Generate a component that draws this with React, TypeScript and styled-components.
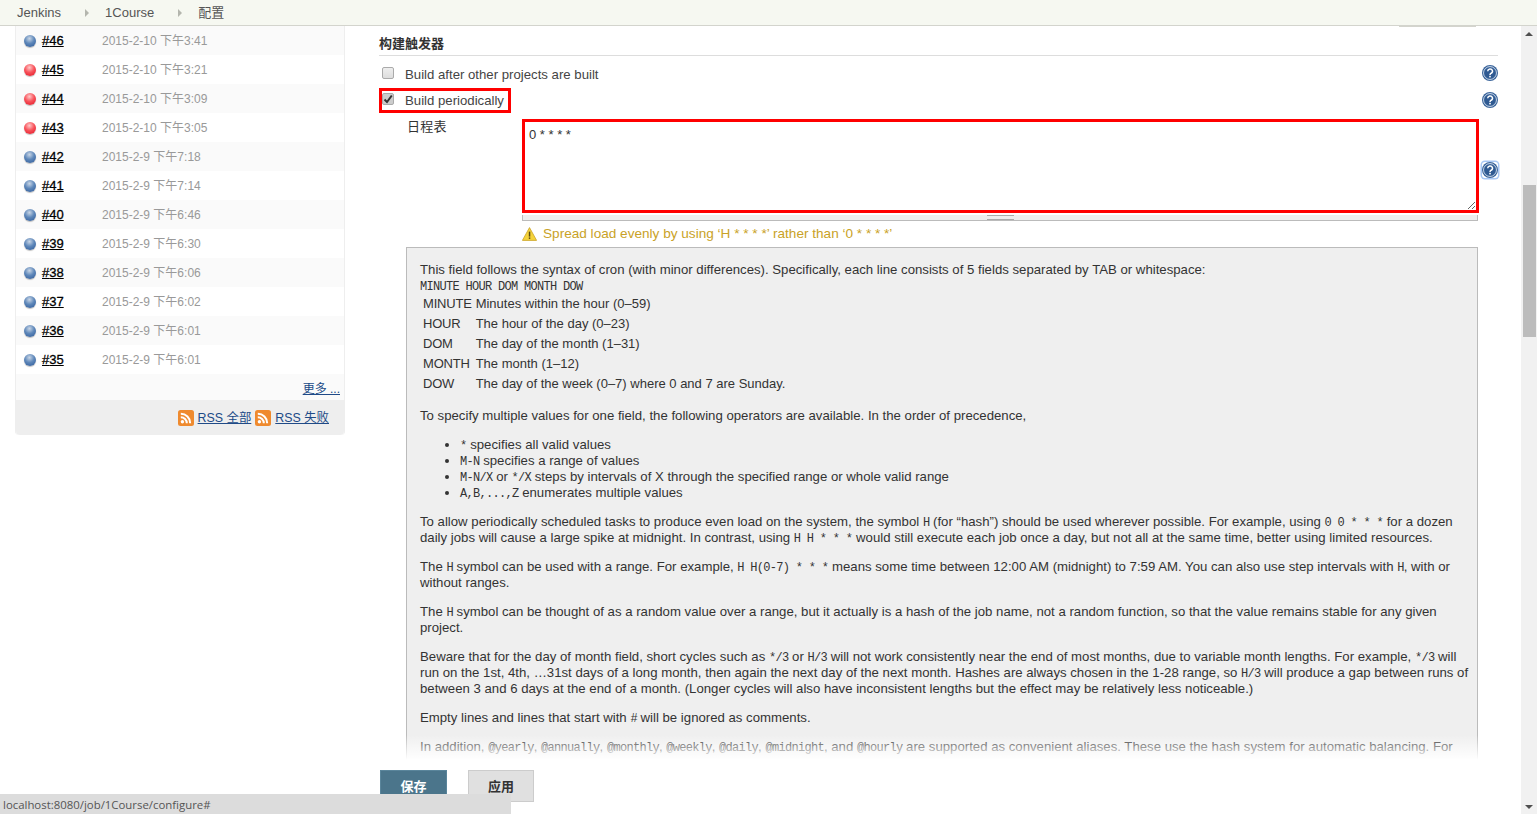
import { createGlobalStyle, styled } from "styled-components";

const builds = [
  { id: "46", date: "2015-2-10 下午3:41", ok: true },
  { id: "45", date: "2015-2-10 下午3:21", ok: false },
  { id: "44", date: "2015-2-10 下午3:09", ok: false },
  { id: "43", date: "2015-2-10 下午3:05", ok: false },
  { id: "42", date: "2015-2-9 下午7:18", ok: true },
  { id: "41", date: "2015-2-9 下午7:14", ok: true },
  { id: "40", date: "2015-2-9 下午6:46", ok: true },
  { id: "39", date: "2015-2-9 下午6:30", ok: true },
  { id: "38", date: "2015-2-9 下午6:06", ok: true },
  { id: "37", date: "2015-2-9 下午6:02", ok: true },
  { id: "36", date: "2015-2-9 下午6:01", ok: true },
  { id: "35", date: "2015-2-9 下午6:01", ok: true },
];

const fields = [
  ["MINUTE", "Minutes within the hour (0–59)"],
  ["HOUR", "The hour of the day (0–23)"],
  ["DOM", "The day of the month (1–31)"],
  ["MONTH", "The month (1–12)"],
  ["DOW", "The day of the week (0–7) where 0 and 7 are Sunday."],
];

const HelpIcon = () => (
  <svg width="16" height="16" viewBox="0 0 16 16">
    <circle cx="8" cy="8" r="8" fill="#3b659b" />
    <circle cx="8" cy="8" r="6.4" fill="none" stroke="#dfe8f3" strokeWidth="0.9" />
    <circle cx="8" cy="8" r="5.6" fill="#2f5a92" />
    <path d="M5.7 6.2a2.4 2.2 0 1 1 3.5 2c-.8.5-1.2.8-1.2 1.8" fill="none" stroke="#fff" strokeWidth="1.5" />
    <rect x="7.2" y="10.8" width="1.6" height="1.6" fill="#fff" />
  </svg>
);

const RssIcon = () => (
  <svg width="16" height="16" viewBox="0 0 16 16">
    <rect width="16" height="16" rx="2.5" fill="#ef8a2e" />
    <circle cx="4.4" cy="11.8" r="1.7" fill="#fff" />
    <path d="M2.8 7.2a6 6 0 0 1 6 6M2.8 3.8a9.4 9.4 0 0 1 9.4 9.4" fill="none" stroke="#fff" strokeWidth="2" />
  </svg>
);

const WarningIcon = () => (
  <svg width="15" height="14" viewBox="0 0 15 14">
    <path d="M7.5 .6 14.6 13.4H.4Z" fill="#f5d33b" stroke="#c9a227" strokeWidth="0.8" />
    <rect x="6.8" y="4.6" width="1.5" height="5" fill="#5a4a10" />
    <rect x="6.8" y="10.4" width="1.5" height="1.5" fill="#5a4a10" />
  </svg>
);

const App = () => {
  return (
    <Shell>
      <GlobalStyle />
      <TopBar>
        <Crumb>Jenkins</Crumb>
        <CrumbArrow />
        <Crumb>1Course</Crumb>
        <CrumbArrow />
        <Crumb>配置</Crumb>
        <TabStub />
      </TopBar>
      <Body>
        <Sidebar>
          {builds.map((build, index) => (
            <BuildRow key={build.id} $odd={index % 2 === 0}>
              <Ball $ok={build.ok} />
              <BuildLink href="#">#{build.id}</BuildLink>
              <BuildDate>{build.date}</BuildDate>
            </BuildRow>
          ))}
          <MoreRow>
            <MoreLink href="#">更多 ...</MoreLink>
          </MoreRow>
          <RssRow>
            <RssIcon />
            <BlueLink href="#">RSS 全部</BlueLink>
            <RssIcon />
            <BlueLink href="#">RSS 失败</BlueLink>
          </RssRow>
        </Sidebar>
        <Main>
          <SectionTitle>构建触发器</SectionTitle>
          <CheckRow>
            <CheckLabel>
              <CheckBox />
              Build after other projects are built
            </CheckLabel>
            <HelpButton $lift={3}>
              <HelpIcon />
            </HelpButton>
          </CheckRow>
          <CheckRow>
            <CheckLabel $marked>
              <CheckBox $checked>
                <svg width="10" height="10" viewBox="0 0 10 10">
                  <path d="M1.5 5.5 4 8l4.8-6.5" fill="none" stroke="#333" strokeWidth="2" />
                </svg>
              </CheckBox>
              Build periodically
            </CheckLabel>
            <HelpButton $lift={1}>
              <HelpIcon />
            </HelpButton>
          </CheckRow>
          <ScheduleRow>
            <ScheduleLabel>日程表</ScheduleLabel>
            <ScheduleField>
              <ScheduleInput defaultValue="0 * * * *" spellCheck={false} />
              <Grippie>
                <GrippieLines />
              </Grippie>
            </ScheduleField>
            <HelpButton $focused>
              <HelpIcon />
            </HelpButton>
          </ScheduleRow>
          <Warning>
            <WarningIcon />
            Spread load evenly by using ‘H * * * *’ rather than ‘0 * * * *’
          </Warning>
          <HelpBox>
            <Para>
              This field follows the syntax of cron (with minor differences). Specifically, each line consists of 5
              fields separated by TAB or whitespace:
              <br />
              <Code>MINUTE HOUR DOM MONTH DOW</Code>
            </Para>
            <FieldTable>
              <tbody>
                {fields.map(([name, text]) => (
                  <tr key={name}>
                    <td>{name}</td>
                    <td>{text}</td>
                  </tr>
                ))}
              </tbody>
            </FieldTable>
            <Para>
              To specify multiple values for one field, the following operators are available. In the order of
              precedence,
            </Para>
            <OperatorList>
              <li>
                <Code>*</Code> specifies all valid values
              </li>
              <li>
                <Code>M-N</Code> specifies a range of values
              </li>
              <li>
                <Code>M-N/X</Code> or <Code>*/X</Code> steps by intervals of X through the specified range or whole
                valid range
              </li>
              <li>
                <Code>A,B,...,Z</Code> enumerates multiple values
              </li>
            </OperatorList>
            <Para>
              To allow periodically scheduled tasks to produce even load on the system, the symbol <Code>H</Code> (for
              “hash”) should be used wherever possible. For example, using <Code>0 0 * * *</Code> for a dozen daily jobs
              will cause a large spike at midnight. In contrast, using <Code>H H * * *</Code> would still execute each
              job once a day, but not all at the same time, better using limited resources.
            </Para>
            <Para>
              The <Code>H</Code> symbol can be used with a range. For example, <Code>H H(0-7) * * *</Code> means some
              time between 12:00 AM (midnight) to 7:59 AM. You can also use step intervals with <Code>H</Code>, with or
              without ranges.
            </Para>
            <Para>
              The <Code>H</Code> symbol can be thought of as a random value over a range, but it actually is a hash of
              the job name, not a random function, so that the value remains stable for any given project.
            </Para>
            <Para>
              Beware that for the day of month field, short cycles such as <Code>*/3</Code> or <Code>H/3</Code> will not
              work consistently near the end of most months, due to variable month lengths. For example, <Code>*/3</Code>{" "}
              will run on the 1st, 4th, …31st days of a long month, then again the next day of the next month. Hashes are
              always chosen in the 1-28 range, so <Code>H/3</Code> will produce a gap between runs of between 3 and 6
              days at the end of a month. (Longer cycles will also have inconsistent lengths but the effect may be
              relatively less noticeable.)
            </Para>
            <Para>
              Empty lines and lines that start with <Code>#</Code> will be ignored as comments.
            </Para>
            <Para>
              In addition, <Code>@yearly</Code>, <Code>@annually</Code>, <Code>@monthly</Code>, <Code>@weekly</Code>,{" "}
              <Code>@daily</Code>, <Code>@midnight</Code>, and <Code>@hourly</Code> are supported as convenient aliases.
              These use the hash system for automatic balancing. For
            </Para>
          </HelpBox>
          <ActionBar>
            <SaveButton>保存</SaveButton>
            <ApplyButton>应用</ApplyButton>
          </ActionBar>
        </Main>
        <Scrollbar>
          <ScrollArrow $up />
          <ScrollThumb />
          <ScrollArrow />
        </Scrollbar>
      </Body>
      <StatusBar>localhost:8080/job/1Course/configure#</StatusBar>
    </Shell>
  );
};

export default App;

const GlobalStyle = createGlobalStyle`
  html, body {
    margin: 0;
    height: 100%;
    overflow: hidden;
    background: #fff;
  }
  body {
    font-family: "Liberation Sans", "Noto Sans CJK SC", sans-serif;
    font-size: 13px;
    line-height: 16px;
    color: #333;
  }
`;

const Shell = styled.div`
  position: relative;
  display: flex;
  flex-direction: column;
  height: 100vh;
  overflow: hidden;
`;

const TopBar = styled.div`
  position: relative;
  display: flex;
  align-items: center;
  flex: none;
  height: 25px;
  padding-left: 17px;
  background: #f6f8f1;
  border-bottom: 1px solid #d3d4cd;
`;

const Crumb = styled.span`
  color: #555;
`;

const CrumbArrow = styled.span`
  width: 0;
  height: 0;
  margin: 0 16px 0 24px;
  border-left: 4px solid #b4b6ae;
  border-top: 4px solid transparent;
  border-bottom: 4px solid transparent;
`;

const TabStub = styled.div`
  position: absolute;
  left: 1399px;
  bottom: -2px;
  width: 77px;
  height: 1px;
  background: #d3d4cd;
`;

const Body = styled.div`
  display: flex;
  flex: 1;
  min-height: 0;
`;

const Sidebar = styled.div`
  flex: none;
  align-self: flex-start;
  width: 328px;
  margin-left: 15px;
  border-left: 1px solid #eee;
  border-right: 1px solid #eee;
  border-radius: 0 0 4px 4px;
`;

const BuildRow = styled.div<{ $odd: boolean }>`
  display: flex;
  align-items: center;
  height: 29px;
  padding-left: 8px;
  background: ${(p) => (p.$odd ? "#fafafa" : "#fff")};
`;

const Ball = styled.span<{ $ok: boolean }>`
  flex: none;
  width: 12px;
  height: 12px;
  margin-right: 6px;
  border-radius: 50%;
  box-shadow: 0 1px 1px rgba(0, 0, 0, 0.25);
  background: ${(p) =>
    p.$ok
      ? "radial-gradient(circle at 45% 30%, #c9d6e6 0%, #5f88ba 45%, #2a5696 100%)"
      : "radial-gradient(circle at 45% 30%, #ffc9c9 0%, #f8545c 45%, #e01020 100%)"};
`;

const BuildLink = styled.a`
  width: 60px;
  color: #000;
  text-decoration: underline;
  -webkit-text-stroke: 0.3px #000;
`;

const BuildDate = styled.span`
  font-size: 12px;
  color: #999;
`;

const MoreRow = styled.div`
  display: flex;
  justify-content: flex-end;
  align-items: flex-end;
  box-sizing: border-box;
  height: 26px;
  padding: 0 4px 3px 0;
  background: #fafafa;
`;

const BlueLink = styled.a`
  color: #204a87;
  text-decoration: underline;
  font-size: 12.4px;
`;

const MoreLink = styled(BlueLink)`
  font-size: 12px;
`;

const RssRow = styled.div`
  display: flex;
  justify-content: flex-end;
  align-items: center;
  gap: 4px;
  height: 35px;
  padding-right: 15px;
  background: #eee;
  border-radius: 0 0 4px 4px;
`;

const Main = styled.div`
  position: relative;
  flex: 1;
  min-width: 0;
  padding: 10px 23px 0 34px;
`;

const SectionTitle = styled.div`
  padding-bottom: 3px;
  margin-bottom: 6px;
  font-weight: bold;
  color: #333;
  border-bottom: 1px solid #ddd;
`;

const CheckRow = styled.div`
  display: flex;
  justify-content: space-between;
  align-items: center;
  height: 25px;
  margin-bottom: 1px;
`;

const CheckLabel = styled.label<{ $marked?: boolean }>`
  display: flex;
  align-items: center;
  box-sizing: border-box;
  height: 25px;
  padding: ${(p) => (p.$marked ? "1px 4px 0 0" : "0")};
  font-size: 13.2px;
  color: #444;
  border: 3px solid ${(p) => (p.$marked ? "#f00" : "transparent")};
`;

const CheckBox = styled.span<{ $checked?: boolean }>`
  display: flex;
  align-items: center;
  justify-content: center;
  box-sizing: border-box;
  flex: none;
  width: 12px;
  height: 12px;
  margin: -4px 11px 0 0;
  border: 1px solid #aaa;
  border-radius: 2px;
  background: ${(p) => (p.$checked ? "#ccc" : "linear-gradient(#eee, #ddd)")};
`;

const HelpButton = styled.span<{ $focused?: boolean; $lift?: number }>`
  display: flex;
  flex: none;
  align-self: center;
  width: 16px;
  height: 16px;
  margin-top: ${(p) => -(p.$lift ?? 0)}px;
  border-radius: 3px;
  box-shadow: ${(p) => (p.$focused ? "0 0 0 1.5px #a9c8f5" : "none")};
`;

const ScheduleRow = styled.div`
  display: grid;
  grid-template-columns: 143px 957px 16px;
  align-items: start;
  margin-top: 6px;

  ${HelpButton} {
    margin-left: 3px;
  }
`;

const ScheduleLabel = styled.div`
  margin: 0 0 0 28px;
  letter-spacing: 0.2px;
  color: #333;
`;

const ScheduleField = styled.div`
  display: flex;
  flex-direction: column;
  width: 957px;
`;

const ScheduleInput = styled.textarea`
  display: block;
  box-sizing: border-box;
  width: 957px;
  height: 94px;
  padding: 5px 4px 4px;
  font: 13px/16px "Liberation Sans", sans-serif;
  color: #333;
  border: 3px solid #f00;
  outline: none;
  resize: vertical;
`;

const Grippie = styled.div`
  display: flex;
  justify-content: center;
  box-sizing: border-box;
  width: 956px;
  height: 6px;
  margin-top: 2px;
  background: #eee;
  border: 1px solid #bbb;
  border-top: none;
`;

const GrippieLines = styled.div`
  width: 27px;
  height: 3px;
  border-top: 1px solid #aaa;
  border-bottom: 1px solid #aaa;
`;

const Warning = styled.div`
  display: flex;
  align-items: center;
  gap: 6px;
  height: 16px;
  margin: 5px 0 5px 143px;
  font-size: 13.6px;
  color: #c9a227;
`;

const HelpBox = styled.div`
  box-sizing: border-box;
  width: 1072px;
  margin: 0 0 0 27px;
  padding: 14px 5px 13px 13px;
  font-size: 13.2px;
  color: #333;
  background: #efefef;
  border: 1px solid #bbb;
`;

const Para = styled.p`
  margin: 0 0 13px;
`;

const Code = styled.code`
  font-family: "Liberation Mono", monospace;
  font-size: 12px;
  line-height: 1;
  letter-spacing: -0.7px;
`;

const FieldTable = styled.table`
  margin: -14.5px 0 13.5px;
  border-spacing: 2px;
  font-size: 13px;
  td {
    padding: 1px;
  }
  td:first-child {
    letter-spacing: -0.2px;
  }
`;

const OperatorList = styled.ul`
  margin: 0 0 13px;
  padding-left: 40px;
`;

const ActionBar = styled.div`
  position: absolute;
  left: 0;
  right: 0;
  bottom: 0;
  display: flex;
  align-items: flex-start;
  gap: 21px;
  height: 44px;
  padding: 35px 0 0 35px;
  background: linear-gradient(rgba(255, 255, 255, 0), #fff 25px);
`;

const SaveButton = styled.button`
  width: 67px;
  height: 32px;
  padding: 0 0 2px;
  font: bold 13px "Liberation Sans", "Noto Sans CJK SC", sans-serif;
  color: #fff;
  background: #4b758b;
  border: 1px solid #5a859b;
`;

const ApplyButton = styled(SaveButton)`
  width: 66px;
  color: #333;
  background: #e0e0e0;
  border-color: #ccc;
`;

const Scrollbar = styled.div`
  position: relative;
  flex: none;
  width: 16px;
  background: #f1f1f1;
`;

const ScrollArrow = styled.div<{ $up?: boolean }>`
  position: absolute;
  left: 4px;
  ${(p) => (p.$up ? "top: 6px;" : "bottom: 5px;")}
  width: 0;
  height: 0;
  border-left: 4px solid transparent;
  border-right: 4px solid transparent;
  ${(p) => (p.$up ? "border-bottom: 4px solid #505050;" : "border-top: 4px solid #505050;")}
`;

const ScrollThumb = styled.div`
  position: absolute;
  top: 159px;
  left: 2px;
  width: 13px;
  height: 152px;
  background: #bcbcbc;
`;

const StatusBar = styled.div`
  position: absolute;
  left: 0;
  bottom: 0;
  box-sizing: border-box;
  width: 511px;
  height: 20px;
  padding: 3px 0 0 3px;
  font: 11.4px/16px "Open Sans", sans-serif;
  color: #555;
  background: #dcdcdc;
`;
